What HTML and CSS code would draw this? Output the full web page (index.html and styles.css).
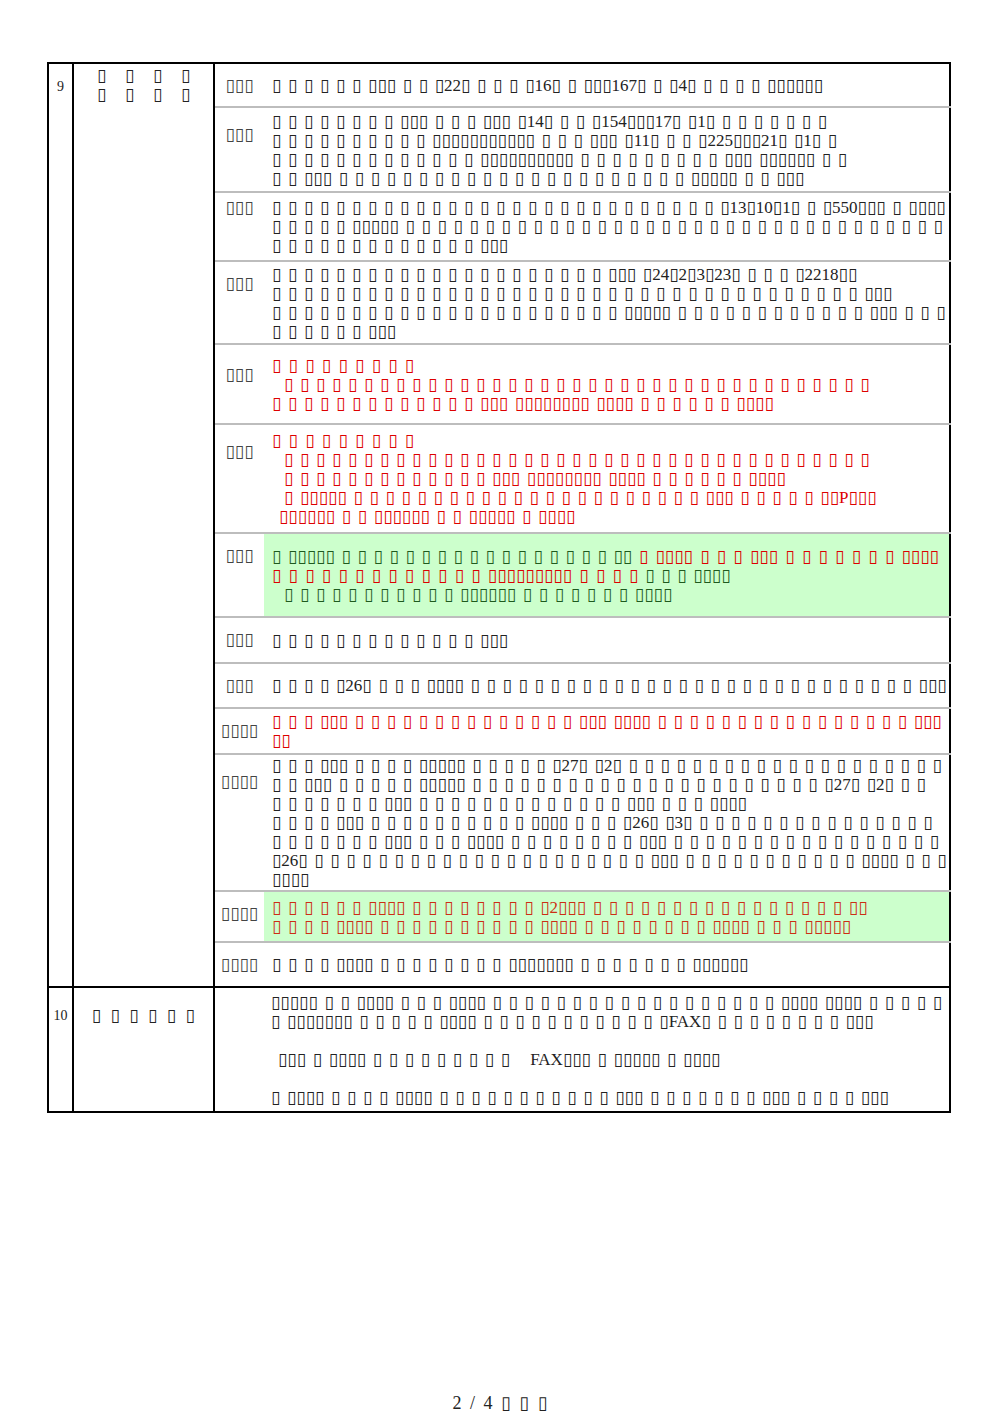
FILE: index.html
```html
<!DOCTYPE html>
<html lang="ja">
<head>
  <meta charset="UTF-8">
  <meta name="viewport" content="width=device-width, initial-scale=1.0">
  <title>▯▯▯▯</title>
  <link rel="stylesheet" href="styles.css">
</head>
<body>
  <table class="sheet">
    <colgroup>
      <col class="c-no">
      <col class="c-item">
      <col class="c-lbl">
      <col class="c-body">
    </colgroup>

    <!-- 9 -->
    <tr class="h44 first">
      <td class="no" rowspan="13">9</td>
      <td class="item" rowspan="13">▯▯▯▯<br>▯▯▯▯</td>
      <td class="lbl">▯▯▯</td>
      <td class="body">▯ ▯ ▯ ▯ ▯ ▯ ▯▯▯ ▯ ▯ ▯22▯ ▯ ▯ ▯ ▯16▯ ▯ ▯▯▯167▯ ▯ ▯4▯ ▯ ▯ ▯ ▯ ▯▯▯▯▯▯</td>
    </tr>
    <tr class="h85">
      <td class="lbl low">▯▯▯</td>
      <td class="body">▯ ▯ ▯ ▯ ▯ ▯ ▯ ▯ ▯▯▯ ▯ ▯ ▯ ▯▯▯ ▯14▯ ▯ ▯ ▯154▯▯▯17▯ ▯1▯ ▯ ▯ ▯ ▯ ▯ ▯ ▯<br>▯ ▯ ▯ ▯ ▯ ▯ ▯ ▯ ▯ ▯ ▯▯▯▯▯▯▯▯▯▯▯ ▯ ▯ ▯ ▯▯▯ ▯11▯ ▯ ▯ ▯225▯▯▯21▯ ▯1▯ ▯<br>▯ ▯ ▯ ▯ ▯ ▯ ▯ ▯ ▯ ▯ ▯ ▯ ▯ ▯▯▯▯▯▯▯▯▯▯ ▯ ▯ ▯ ▯ ▯ ▯ ▯ ▯ ▯ ▯▯▯ ▯▯▯▯▯▯ ▯ ▯<br>▯ ▯ ▯▯▯ ▯ ▯ ▯ ▯ ▯ ▯ ▯ ▯ ▯ ▯ ▯ ▯ ▯ ▯ ▯ ▯ ▯ ▯ ▯ ▯ ▯ ▯ ▯▯▯▯▯ ▯ ▯ ▯▯▯</td>
    </tr>
    <tr class="h69">
      <td class="lbl high">▯▯▯</td>
      <td class="body">▯ ▯ ▯ ▯ ▯ ▯ ▯ ▯ ▯ ▯ ▯ ▯ ▯ ▯ ▯ ▯ ▯ ▯ ▯ ▯ ▯ ▯ ▯ ▯ ▯ ▯ ▯ ▯ ▯13▯10▯1▯ ▯ ▯550▯▯▯ ▯ ▯▯▯▯<br>▯ ▯ ▯ ▯ ▯ ▯▯▯▯▯ ▯ ▯ ▯ ▯ ▯ ▯ ▯ ▯ ▯ ▯ ▯ ▯ ▯ ▯ ▯ ▯ ▯ ▯ ▯ ▯ ▯ ▯ ▯ ▯ ▯ ▯ ▯ ▯ ▯ ▯ ▯ ▯ ▯ ▯<br>▯ ▯ ▯ ▯ ▯ ▯ ▯ ▯ ▯ ▯ ▯ ▯ ▯ ▯▯▯</td>
    </tr>
    <tr class="h83">
      <td class="lbl">▯▯▯</td>
      <td class="body">▯ ▯ ▯ ▯ ▯ ▯ ▯ ▯ ▯ ▯ ▯ ▯ ▯ ▯ ▯ ▯ ▯ ▯ ▯ ▯ ▯ ▯▯▯ ▯24▯2▯3▯23▯ ▯ ▯ ▯ ▯2218▯▯<br>▯ ▯ ▯ ▯ ▯ ▯ ▯ ▯ ▯ ▯ ▯ ▯ ▯ ▯ ▯ ▯ ▯ ▯ ▯ ▯ ▯ ▯ ▯ ▯ ▯ ▯ ▯ ▯ ▯ ▯ ▯ ▯ ▯ ▯ ▯ ▯ ▯ ▯▯▯<br>▯ ▯ ▯ ▯ ▯ ▯ ▯ ▯ ▯ ▯ ▯ ▯ ▯ ▯ ▯ ▯ ▯ ▯ ▯ ▯ ▯ ▯ ▯▯▯▯▯ ▯ ▯ ▯ ▯ ▯ ▯ ▯ ▯ ▯ ▯ ▯ ▯ ▯▯▯ ▯ ▯ ▯<br>▯ ▯ ▯ ▯ ▯ ▯ ▯▯▯</td>
    </tr>
    <tr class="h80">
      <td class="lbl lower">▯▯▯</td>
      <td class="body red"><b>▯ ▯ ▯ ▯ ▯ ▯ ▯ ▯ ▯</b><br><span class="ind">▯ ▯ ▯ ▯ ▯ ▯ ▯ ▯ ▯ ▯ ▯ ▯ ▯ ▯ ▯ ▯ ▯ ▯ ▯ ▯ ▯ ▯ ▯ ▯ ▯ ▯ ▯ ▯ ▯ ▯ ▯ ▯ ▯ ▯ ▯ ▯ ▯</span><br>▯ ▯ ▯ ▯ ▯ ▯ ▯ ▯ ▯ ▯ ▯ ▯ ▯ ▯▯▯ ▯▯▯▯▯▯▯▯ ▯▯▯▯ ▯ ▯ ▯ ▯ ▯ ▯ ▯▯▯▯</td>
    </tr>
    <tr class="h109">
      <td class="lbl low">▯▯▯</td>
      <td class="body red"><b>▯ ▯ ▯ ▯ ▯ ▯ ▯ ▯ ▯</b><br><span class="ind">▯ ▯ ▯ ▯ ▯ ▯ ▯ ▯ ▯ ▯ ▯ ▯ ▯ ▯ ▯ ▯ ▯ ▯ ▯ ▯ ▯ ▯ ▯ ▯ ▯ ▯ ▯ ▯ ▯ ▯ ▯ ▯ ▯ ▯ ▯ ▯ ▯</span><br><span class="ind">▯ ▯ ▯ ▯ ▯ ▯ ▯ ▯ ▯ ▯ ▯ ▯ ▯ ▯▯▯ ▯▯▯▯▯▯▯▯ ▯▯▯▯ ▯ ▯ ▯ ▯ ▯ ▯ ▯▯▯▯</span><br><span class="ind">▯ ▯▯▯▯▯ ▯ ▯ ▯ ▯ ▯ ▯ ▯ ▯ ▯ ▯ ▯ ▯ ▯ ▯ ▯ ▯ ▯ ▯ ▯ ▯ ▯ ▯ ▯▯▯ ▯ ▯ ▯ ▯ ▯ ▯▯P▯▯▯</span><br><span class="ind-s">▯▯▯▯▯▯ ▯ ▯ ▯▯▯▯▯▯ ▯ ▯ ▯▯▯▯▯ ▯ ▯▯▯▯</span></td>
    </tr>
    <tr class="h84">
      <td class="lbl">▯▯▯</td>
      <td class="body hl green">▯ ▯▯▯▯▯ ▯ ▯ ▯ ▯ ▯ ▯ ▯ ▯ ▯ ▯ ▯ ▯ ▯ ▯ ▯ ▯ ▯ ▯▯ <b class="red">▯ ▯▯▯▯ ▯ ▯ ▯ ▯▯▯ ▯ ▯ ▯ ▯ ▯ ▯ ▯ ▯▯▯▯</b><br><b class="red">▯ ▯ ▯ ▯ ▯ ▯ ▯ ▯ ▯ ▯ ▯ ▯ ▯ ▯▯▯▯▯▯▯▯▯ ▯ ▯ ▯ ▯</b> ▯ ▯ ▯ ▯▯▯▯<br><span class="ind">▯ ▯ ▯ ▯ ▯ ▯ ▯ ▯ ▯ ▯ ▯ ▯▯▯▯▯▯ ▯ ▯ ▯ ▯ ▯ ▯ ▯ ▯▯▯▯</span></td>
    </tr>
    <tr class="h46">
      <td class="lbl">▯▯▯</td>
      <td class="body">▯ ▯ ▯ ▯ ▯ ▯ ▯ ▯ ▯ ▯ ▯ ▯ ▯ ▯▯▯</td>
    </tr>
    <tr class="h45">
      <td class="lbl">▯▯▯</td>
      <td class="body">▯ ▯ ▯ ▯ ▯26▯ ▯ ▯ ▯ ▯▯▯▯ ▯ ▯ ▯ ▯ ▯ ▯ ▯ ▯ ▯ ▯ ▯ ▯ ▯ ▯ ▯ ▯ ▯ ▯ ▯ ▯ ▯ ▯ ▯ ▯ ▯ ▯ ▯ ▯ ▯▯▯</td>
    </tr>
    <tr class="h46">
      <td class="lbl">▯▯▯▯</td>
      <td class="body red">▯ ▯ ▯ ▯▯▯ ▯ ▯ ▯ ▯ ▯ ▯ ▯ ▯ ▯ ▯ ▯ ▯ ▯ ▯ ▯▯▯ ▯▯▯▯ ▯ ▯ ▯ ▯ ▯ ▯ ▯ ▯ ▯ ▯ ▯ ▯ ▯ ▯ ▯ ▯ ▯▯▯<br>▯▯</td>
    </tr>
    <tr class="h137">
      <td class="lbl low">▯▯▯▯</td>
      <td class="body">▯ ▯ ▯ ▯▯▯ ▯ ▯ ▯ ▯ ▯▯▯▯▯ ▯ ▯ ▯ ▯ ▯ ▯27▯ ▯2▯ ▯ ▯ ▯ ▯ ▯ ▯ ▯ ▯ ▯ ▯ ▯ ▯ ▯ ▯ ▯ ▯ ▯ ▯ ▯ ▯<br>▯ ▯ ▯▯▯ ▯ ▯ ▯ ▯ ▯ ▯▯▯▯▯ ▯ ▯ ▯ ▯ ▯ ▯ ▯ ▯ ▯ ▯ ▯ ▯ ▯ ▯ ▯ ▯ ▯ ▯ ▯ ▯ ▯ ▯ ▯27▯ ▯2▯ ▯ ▯<br>▯ ▯ ▯ ▯ ▯ ▯ ▯ ▯▯▯ ▯ ▯ ▯ ▯ ▯ ▯ ▯ ▯ ▯ ▯ ▯ ▯ ▯ ▯▯▯ ▯ ▯ ▯ ▯▯▯▯<br>▯ ▯ ▯ ▯ ▯▯▯ ▯ ▯ ▯ ▯ ▯ ▯ ▯ ▯ ▯ ▯ ▯▯▯▯ ▯ ▯ ▯ ▯26▯ ▯3▯ ▯ ▯ ▯ ▯ ▯ ▯ ▯ ▯ ▯ ▯ ▯ ▯ ▯ ▯ ▯<br>▯ ▯ ▯ ▯ ▯ ▯ ▯ ▯▯▯ ▯ ▯ ▯ ▯▯▯▯ ▯ ▯ ▯ ▯ ▯ ▯ ▯ ▯ ▯▯▯ ▯ ▯ ▯ ▯ ▯ ▯ ▯ ▯ ▯ ▯ ▯ ▯ ▯ ▯ ▯ ▯ ▯<br>▯26▯ ▯ ▯ ▯ ▯ ▯ ▯ ▯ ▯ ▯ ▯ ▯ ▯ ▯ ▯ ▯ ▯ ▯ ▯ ▯ ▯ ▯ ▯▯▯ ▯ ▯ ▯ ▯ ▯ ▯ ▯ ▯ ▯ ▯ ▯ ▯▯▯▯ ▯ ▯ ▯<br>▯▯▯▯</td>
    </tr>
    <tr class="h51">
      <td class="lbl">▯▯▯▯</td>
      <td class="body hl rust">▯ ▯ ▯ ▯ ▯ ▯ ▯▯▯▯ ▯ ▯ ▯ ▯ ▯ ▯ ▯ ▯ ▯2▯▯▯ ▯ ▯ ▯ ▯ ▯ ▯ ▯ ▯ ▯ ▯ ▯ ▯ ▯ ▯ ▯ ▯ ▯▯<br>▯ ▯ ▯ ▯ ▯▯▯▯ ▯ ▯ ▯ ▯ ▯ ▯ ▯ ▯ ▯ ▯ ▯▯▯▯ ▯ ▯ ▯ ▯ ▯ ▯ ▯ ▯ ▯▯▯▯ ▯ ▯ ▯ ▯▯▯▯▯</td>
    </tr>
    <tr class="h45">
      <td class="lbl">▯▯▯▯</td>
      <td class="body">▯ ▯ ▯ ▯ ▯▯▯▯ ▯ ▯ ▯ ▯ ▯ ▯ ▯ ▯ ▯▯▯▯▯▯▯ ▯ ▯ ▯ ▯ ▯ ▯ ▯ ▯▯▯▯▯▯</td>
    </tr>

    <!-- 10 -->
    <tr class="h125 next">
      <td class="no no-10">10</td>
      <td class="item item-10">▯▯▯▯▯▯</td>
      <td class="body wide" colspan="2">▯▯▯▯▯ ▯ ▯ ▯▯▯▯ ▯ ▯ ▯ ▯▯▯▯ ▯ ▯ ▯ ▯ ▯ ▯ ▯ ▯ ▯ ▯ ▯ ▯ ▯ ▯ ▯ ▯ ▯ ▯ ▯▯▯▯ ▯▯▯▯ ▯ ▯ ▯ ▯ ▯<br>▯ ▯▯▯▯▯▯▯ ▯ ▯ ▯ ▯ ▯ ▯▯▯▯ ▯ ▯ ▯ ▯ ▯ ▯ ▯ ▯ ▯ ▯ ▯ ▯FAX▯ ▯ ▯ ▯ ▯ ▯ ▯ ▯ ▯ ▯▯▯<br><br><span class="ind-s">▯▯▯ ▯ ▯▯▯▯ ▯ ▯ ▯ ▯ ▯ ▯ ▯ ▯ ▯&nbsp;&nbsp; FAX▯▯▯ ▯ ▯▯▯▯▯ ▯ ▯▯▯▯</span><br><br>▯ ▯▯▯▯ ▯ ▯ ▯ ▯ ▯▯▯▯ ▯ ▯ ▯ ▯ ▯ ▯ ▯ ▯ ▯ ▯ ▯ ▯▯▯ ▯ ▯ ▯ ▯ ▯ ▯ ▯ ▯▯▯ ▯ ▯ ▯ ▯ ▯▯▯</td>
    </tr>
  </table>

  <div class="folio">2 / 4 ▯ ▯ ▯</div>
</body>
</html>
```
FILE: styles.css
```css
body {
  margin: 0;
  font-family: "Liberation Serif", "DejaVu Sans", serif;
  font-size: 17px;
  color: #222;
}
.sheet {
  margin: 62px 0 0 47px;
  width: 904px;
  border-collapse: collapse;
  table-layout: fixed;
  border: 2px solid #000;
}
.c-no { width: 25px; }
.c-item { width: 141px; }
.c-lbl { width: 50px; }
.sheet td {
  padding: 0;
  line-height: 19px;
  vertical-align: middle;
}
.h44 { height: 44px; }
.h45 { height: 45px; }
.h46 { height: 46px; }
.h51 { height: 51px; }
.h69 { height: 69px; }
.h80 { height: 80px; }
.h83 { height: 83px; }
.h84 { height: 84px; }
.h85 { height: 85px; }
.h109 { height: 109px; }
.h125 { height: 125px; }
.h137 { height: 137px; }

.sheet td.no {
  vertical-align: top;
  text-align: center;
  font-size: 14px;
  padding-top: 13px;
  border-right: 2px solid #000;
}
.sheet td.item {
  vertical-align: top;
  text-align: center;
  padding: 2px 0 0 19px;
  letter-spacing: 18.6px;
  border-right: 2px solid #000;
}
.sheet td.no-10 { padding-top: 18px; }
.sheet td.item-10 {
  padding: 18px 0 0 9px;
  letter-spacing: 9.4px;
}
.sheet td.lbl {
  vertical-align: top;
  text-align: center;
  color: #444;
  padding-top: 12px;
  border-top: 2px solid #bdbdbd;
}
.sheet td.lbl.high { padding-top: 5px; }
.sheet td.lbl.low { padding-top: 17px; }
.sheet td.lbl.lower { padding-top: 20px; }
.sheet td.body {
  padding: 0 4px 0 8px;
  white-space: nowrap;
  word-spacing: 2.4px;
  border-top: 2px solid #bdbdbd;
}
.sheet td.body b { word-spacing: 3px; }
.sheet .first td.lbl,
.sheet .first td.body { border-top: none; }
.sheet .next td { border-top: 2px solid #000; }
.sheet td.wide { padding-left: 56px; }

.hl { background: #ccffcc; }
.red { color: #dd0000; }
.green { color: #1e5a1e; }
.rust { color: #cc2e14; }
.ind { padding-left: 12px; }
.ind-s { padding-left: 7px; }

.folio {
  margin-top: 279px;
  text-align: center;
  font-size: 18px;
  line-height: 22px;
  word-spacing: 4px;
}
```
